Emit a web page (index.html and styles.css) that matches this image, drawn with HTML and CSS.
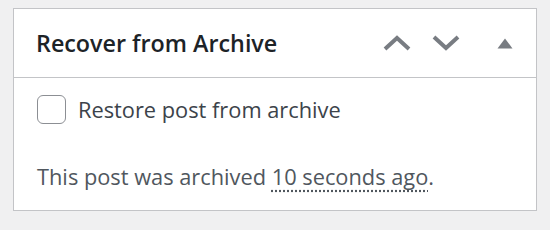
FILE: index.html
```html
<!DOCTYPE html>
<html lang="en">
<head>
  <meta charset="UTF-8" />
  <title>Recover from Archive</title>
  <link rel="stylesheet" href="styles.css">
</head>
<body>
  <div class="postbox">
    <div class="postbox-header">
      <h2>Recover from Archive</h2>
      <div class="handle-actions">
        <button class="handle-btn" aria-label="Move up">
          <svg width="28" height="16" viewBox="0 0 28 16"><path d="M2 14 L14 3 L26 14" fill="none" stroke="#787c82" stroke-width="4"/></svg>
        </button>
        <button class="handle-btn" aria-label="Move down">
          <svg width="28" height="16" viewBox="0 0 28 16"><path d="M2 2 L14 13 L26 2" fill="none" stroke="#787c82" stroke-width="4"/></svg>
        </button>
        <button class="handle-btn toggle" aria-label="Toggle panel">
          <svg width="16" height="11" viewBox="0 0 16 11"><path d="M0.5 10.5 L8 0.5 L15.5 10.5 Z" fill="#787c82"/></svg>
        </button>
      </div>
    </div>
    <div class="inside">
      <label class="restore">
        <input type="checkbox" />
        <span>Restore post from archive</span>
      </label>
      <p class="archived">This post was archived <abbr title="2024-01-01 12:00">10 seconds ago</abbr>.</p>
    </div>
  </div>
</body>
</html>
```
FILE: styles.css
```css
body {
  margin: 0;
  padding: 8px 13px;
  background-color: #f0f0f1;
  font-family: 'Open Sans', 'Noto Sans', sans-serif;
}
.postbox {
  width: 524px;
  box-sizing: border-box;
  background: #fff;
  border: 1px solid #c3c4c7;
}
.postbox-header {
  display: flex;
  align-items: center;
  height: 68px;
  border-bottom: 1px solid #c3c4c7;
  padding: 0 7px 0 22px;
}
.postbox-header h2 {
  margin: 0;
  font-size: 23.3px;
  font-weight: 600;
  color: #1d2327;
}
.handle-actions {
  margin-left: auto;
  display: flex;
}
.handle-btn {
  width: 49px;
  height: 49px;
  padding: 0;
  border: none;
  background: none;
  display: flex;
  align-items: center;
  justify-content: center;
  cursor: pointer;
}
.handle-btn.toggle {
  margin-left: 10px;
}
.inside {
  padding: 17px 22px 0 23px;
}
.restore {
  display: flex;
  align-items: center;
  font-size: 21.8px;
  color: #3c434a;
}
.restore input {
  appearance: none;
  width: 29px;
  height: 29px;
  margin: 0 12px 0 0;
  border: 1px solid #8c8f94;
  border-radius: 6px;
  background: #fff;
}
.archived {
  margin: 38px 0 0;
  padding-bottom: 19px;
  font-size: 21.8px;
  color: #50575e;
}
.archived abbr {
  text-decoration: underline dotted;
  text-underline-offset: 5px;
}
```
